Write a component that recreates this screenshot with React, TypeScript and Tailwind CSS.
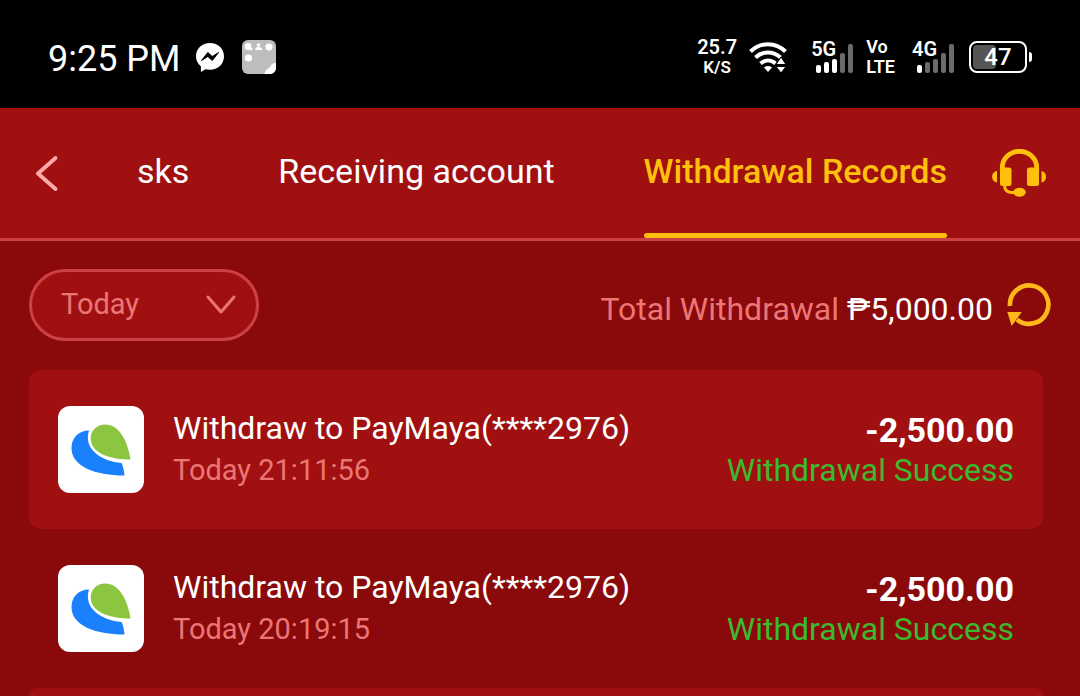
import * as React from "react";

const records = [
  { id: 1, title: "Withdraw to PayMaya(****2976)", time: "Today 21:11:56", amount: "-2,500.00", status: "Withdrawal Success" },
  { id: 2, title: "Withdraw to PayMaya(****2976)", time: "Today 20:19:15", amount: "-2,500.00", status: "Withdrawal Success" },
];

const barHeights = [8, 11, 14, 20, 29];

// mobile signal: network name over five bars, the first `level` are lit
function Signal({ name, level }: { name: string; level: number }) {
  return (
    <div className="relative h-8 w-[43px]">
      <svg className="h-8 w-[43px]" viewBox="0 0 43 32">
        {barHeights.map((h, i) => (
          <rect key={h} x={5 + i * 8} y={32 - h} width="5" height={h} rx="2" fill={i < level ? "#fff" : "#6b6b6b"} />
        ))}
      </svg>
      <span className="absolute left-0 top-0 text-[20px] font-semibold leading-4">{name}</span>
    </div>
  );
}

function StatusBar() {
  return (
    <div className="flex h-27 shrink-0 items-center justify-between bg-black px-12 pt-1.5 text-white">
      <div className="flex items-center">
        <span className="pt-1 text-[36px] leading-10">9:25 PM</span>
        <svg className="ml-[15px] h-[30px] w-7" viewBox="0 0 28 30">
          <path d="M14 1C6 1 0 6.700 0 14.200c0 4.100 1.700 7.500 4.900 10V30l4.500-2.700c1.500.3 3 .5 4.600.5 8 0 14-5.900 14-13.600S22 1 14 1z" fill="#fff" />
          <path d="M5.500 18.500l6.300-8 4.500 4 6.200-4-6.200 8-4.500-4z" fill="#000" stroke="#000" strokeWidth="1" strokeLinejoin="round" />
        </svg>
        <svg className="ml-[18px] h-[34px] w-[34px]" viewBox="0 0 34 34">
          <rect width="34" height="34" rx="6" fill="#bdbdbd" />
          <g fill="#fff">
            <circle cx="6" cy="6.500" r="3.400" />
            <circle cx="9" cy="9" r="1.500" />
            <circle cx="16.500" cy="5" r="1.800" />
            <path d="M13 10c0-4 7-4 7.500 0z" />
            <circle cx="27" cy="7" r="3.600" />
            <circle cx="6.500" cy="18" r="3.600" />
            <path d="M34 23c-5 0-5 3-6.500 4.500S23 30 22.500 34H28a6 6 0 0 0 6-6z" />
          </g>
        </svg>
      </div>
      <div className="flex items-center">
        <div className="flex flex-col items-center font-semibold">
          <span className="text-[20px] leading-5">25.7</span>
          <span className="text-[17px] leading-5">K/S</span>
        </div>
        <svg className="ml-3 h-8 w-[38px]" viewBox="0 0 38 32">
          <g fill="none" stroke="#fff" strokeWidth="4">
            <path d="M1.500 10.500C11.500.7 26.500.7 36.500 10.500" />
            <path d="M6.500 16.500C13.500 9.700 24.500 9.700 31.500 16.500" />
            <path d="M11.500 22.500C16 18.500 22 18.500 26.500 22.500" />
          </g>
          <path d="M15 26.500c2.500-1.900 5.500-1.900 8 0L19 31z" fill="#fff" />
          <path d="M27 23.500l5-7.500 5 7.500zM27 25.500h10L32 32z" fill="#fff" stroke="#000" strokeWidth="1" />
        </svg>
        <div className="ml-6">
          <Signal name="5G" level={3} />
        </div>
        <div className="ml-3 flex flex-col text-[18px] font-semibold leading-5">
          <span>Vo</span>
          <span>LTE</span>
        </div>
        <div className="ml-[17px]">
          <Signal name="4G" level={1} />
        </div>
        <div className="ml-3.5 flex items-center gap-0.5">
          <div className="flex h-8 w-[58px] rounded-lg border-2 border-white p-0.5">
            <div className="relative flex flex-1 items-center justify-center">
              <div className="absolute inset-y-0 left-0 w-[45%] rounded bg-[#555]" />
              <span className="relative text-[24px] font-medium leading-6">47</span>
            </div>
          </div>
          <div className="h-2.5 w-[3px] rounded-r bg-white" />
        </div>
      </div>
    </div>
  );
}

function Headset() {
  return (
    <svg className="h-12 w-[54px]" viewBox="0 0 54 48" fill="#ffbf0d">
      <path d="M10.300 22V18.500a17.200 16.200 0 0 1 34.400 0V22" fill="none" stroke="#ffbf0d" strokeWidth="4.800" />
      <rect x="8" y="18.500" width="11.500" height="18.500" rx="2.500" />
      <rect x="35" y="18.500" width="12" height="18.500" rx="2.500" />
      <path d="M5 22v11.500c-6.500-1-6.500-10.500 0-11.500zM49.500 22v11.500c6-1 6-10.500 0-11.500z" />
      <path d="M12.500 36c0 5 2.500 7.500 8 7.500h3" fill="none" stroke="#ffbf0d" strokeWidth="3" />
      <ellipse cx="27.500" cy="43.300" rx="6.200" ry="4.500" />
    </svg>
  );
}

function PayMayaLogo() {
  return (
    <div className="h-[87px] w-[86px] shrink-0 rounded-xl bg-white">
      <svg className="h-full w-full" viewBox="0 0 86 86">
        <path d="M31 24C20 24 13.500 32 13.500 41.500C13.500 60 37 69 66.500 69C66 64 65 59.500 63.500 56.500C44 55 25 43 31 24Z" fill="#1a80fb" />
        <path d="M72.500 53C54 53 32.700 48 32.700 31.500C32.700 24 39 18 47 18C61 18 69.500 34 72.500 53Z" fill="#8cc540" />
      </svg>
    </div>
  );
}

function App() {
  return (
    <main className="flex h-screen flex-col overflow-hidden bg-[#8a090b] font-['Roboto',sans-serif] text-white">
      <StatusBar />
      <header className="flex h-[133px] shrink-0 items-stretch border-b-3 border-[#cb4144] bg-[#a01011] pl-[35px] pr-[34px]">
        <button className="w-6" aria-label="Back">
          <svg className="h-9 w-6" viewBox="0 0 24 36">
            <path d="M20.500 3L3 18.500L20.500 34" fill="none" stroke="#ffaaaa" strokeWidth="3.800" strokeLinecap="round" strokeLinejoin="round" />
          </svg>
        </button>
        <nav className="ml-[78px] flex flex-1 gap-[89px] whitespace-nowrap text-[34px]">
          <button className="pb-1">sks</button>
          <button className="pb-1">Receiving account</button>
          <button className="relative pb-1 font-medium text-[#ffbf0d]">
            Withdrawal Records
            <span className="absolute inset-x-0 bottom-0 h-[5px] rounded-full bg-[#ffbf0d]" />
          </button>
        </nav>
        <button aria-label="Customer service">
          <Headset />
        </button>
      </header>

      <section className="flex shrink-0 items-center justify-between px-[29px] pb-[29px] pt-7">
        <div className="relative">
          <select aria-label="Period" className="h-[72px] w-[230px] appearance-none rounded-full border-3 border-[#cb4144] bg-[#a01011] pl-[29px] text-[29px] text-[#ec7676]">
            <option>Today</option>
          </select>
          <svg className="pointer-events-none absolute right-[22px] top-6 h-6 w-8" viewBox="0 0 32 24">
            <path d="M3 4l13 15L29 4" fill="none" stroke="#ec7676" strokeWidth="3" strokeLinecap="round" strokeLinejoin="round" />
          </svg>
        </div>
        <div className="flex items-center">
          <p className="pt-2 text-[32px] leading-11">
            <span className="text-[#ec7676]">Total Withdrawal</span> ₱5,000.00
          </p>
          <button className="ml-3.5" aria-label="Refresh">
            <svg className="h-11 w-11" viewBox="0 0 44 44">
              <path d="M3 23A19.200 19.200 0 1 1 10 36.500" fill="none" stroke="#ffb81a" strokeWidth="4.600" />
              <path d="M.3 29h14.400L4.700 43z" fill="#ffb81a" />
            </svg>
          </button>
        </div>
      </section>

      <ul className="flex flex-1 flex-col pl-[29px] pr-[37px]">
        {records.map((record) => (
          <li key={record.id} className="flex shrink-0 gap-[29px] rounded-xl px-[29px] py-9 odd:bg-[#a01011]">
            <PayMayaLogo />
            <div className="flex-1 text-[32px] leading-11">
              <h2>{record.title}</h2>
              <p className="text-[29px] leading-10 text-[#ec7676]">{record.time}</p>
            </div>
            <div className="text-right">
              <p className="text-[34px] font-bold leading-12">{record.amount}</p>
              <p className="text-[32px] leading-8 text-[#3cb92f]">{record.status}</p>
            </div>
          </li>
        ))}
        {/* next card starts below the fold */}
        <li className="flex-1 rounded-t-xl bg-[#a01011]" />
      </ul>
    </main>
  );
}

export default App;
